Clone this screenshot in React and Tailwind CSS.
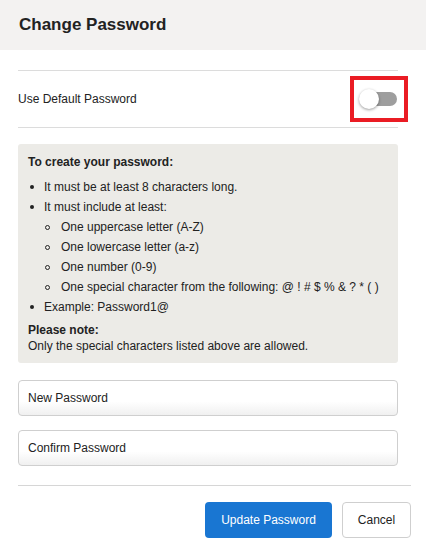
import React from "react";

export default function App() {
  const font = { fontFamily: '"Liberation Sans", Arial, sans-serif' };
  const Dot = () => <span className="shrink-0 w-[4px] h-[4px] rounded-full bg-[#222] ml-[2px] mr-[10px]"></span>;
  return (
    <div className="w-[426px] h-[553px] bg-white text-[#222]" style={font}>
      <div className="h-[50px] bg-[#f3f2f1] flex items-center px-[19px]">
        <h1 className="text-[17px] font-bold text-[#222]">Change Password</h1>
      </div>
      <div className="px-[18px] pt-[20px]">
        <div className="border-t border-b border-[#dcdcdc] mr-[10px] h-[58px] flex items-center justify-between">
          <span className="text-[12px] text-[#222]">Use Default Password</span>
          <div className="w-[58px] h-[46px] border-[4px] border-[#ea1c24] flex items-center justify-center mr-[-10px]">
            <div className="relative w-[36px] h-[14px]">
              <div className="absolute inset-0 rounded-full bg-[#9e9e9e]"></div>
              <div className="absolute left-[-2px] top-[-3px] w-[20px] h-[20px] rounded-full bg-white shadow-[0_1px_3px_rgba(0,0,0,0.4)]"></div>
            </div>
          </div>
        </div>
        <div className="mt-[16px] mr-[10px] bg-[#ecebe7] rounded-[3px] px-[10px] pt-[8px] pb-[9px] text-[12px] leading-[20px]">
          <div className="font-bold">To create your password:</div>
          <ul className="mt-[5px]">
            <li className="flex items-center whitespace-nowrap"><Dot />It must be at least 8 characters long.</li>
            <li className="flex items-center whitespace-nowrap"><Dot />It must include at least:</li>
            {["One uppercase letter (A-Z)", "One lowercase letter (a-z)", "One number (0-9)", "One special character from the following: @ ! # $ % & ? * ( )"].map((t) => (
              <li key={t} className="flex items-center pl-[17px] whitespace-nowrap"><span className="shrink-0 w-[5px] h-[5px] rounded-full border border-[#222] mr-[11px]"></span>{t}</li>
            ))}
            <li className="flex items-center whitespace-nowrap"><Dot />Example: Password1@</li>
          </ul>
          <div className="mt-[5px] leading-[16px]">
            <div className="font-bold">Please note:</div>
            <div>Only the special characters listed above are allowed.</div>
          </div>
        </div>
        <div className="mr-[10px] mt-[17px] flex flex-col gap-[14px]">
          <div className="h-[36px] rounded-[4px] border border-[#cfcfcf] bg-gradient-to-b from-white from-60% to-[#f0f0f0] flex items-center px-[9px] text-[12px]">New Password</div>
          <div className="h-[36px] rounded-[4px] border border-[#cfcfcf] bg-gradient-to-b from-white from-60% to-[#f0f0f0] flex items-center px-[9px] text-[12px]">Confirm Password</div>
        </div>
        <div className="mt-[19px] mr-[-3px] border-t border-[#d6d6d6] pt-[16px] flex justify-end gap-[10px]">
          <button className="w-[127px] h-[36px] rounded-[4px] bg-[#1976d2] text-white text-[12px]">Update Password</button>
          <button className="w-[69px] h-[36px] rounded-[4px] border border-[#cfcfcf] bg-white text-[#222] text-[12px]">Cancel</button>
        </div>
      </div>
    </div>
  );
}
